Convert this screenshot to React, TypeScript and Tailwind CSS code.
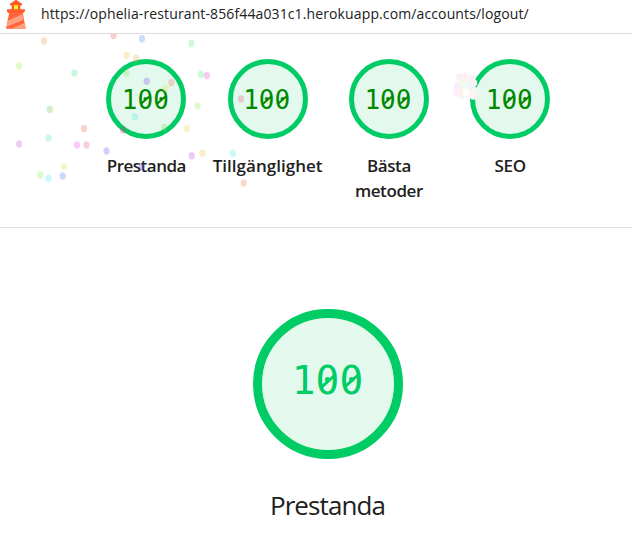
type Score = { label: string; labelClass: string };

const scores: Score[] = [
  { label: 'Prestanda', labelClass: 'tracking-[-0.52px]' },
  { label: 'Tillgänglighet', labelClass: 'tracking-[0.02px]' },
  { label: 'Bästa metoder', labelClass: 'tracking-[-0.4px]' },
  { label: 'SEO', labelClass: 'tracking-[-0.2px]' },
];

// Confetti: x, y, colour
const confetti: [number, number, string][] = [
  [44, 41, '#f0a050'], [19, 66, '#a0ee50'], [74.5, 73, '#40e890'], [49.5, 109.5, '#50d8f0'], [50.8, 109.5, '#f8dc70'],
  [19, 144, '#dc50ee'], [48.5, 138, '#50eeb0'], [84, 128.6, '#f26058'], [77, 145, '#ea50ee'], [86.5, 145, '#f05890'],
  [64, 166.5, '#eee050'], [40.3, 174.7, '#80ee50'], [48.5, 178.3, '#50e8f0'], [62.7, 176, '#5080f0'], [106.5, 151, '#8860f0'],
  [113.5, 35.5, '#f06058'], [142, 38.7, '#5090f0'], [191.5, 43.5, '#50ee80'], [126.5, 55.3, '#f0c850'], [136, 58.5, '#f0b050'],
  [126.5, 73, '#80e850'], [146.7, 81.3, '#8050e8'], [171.5, 82.5, '#f07050'], [165.7, 88.5, '#f0d850'], [201, 74.3, '#50ee80'],
  [207, 75.5, '#f050d0'], [197.5, 106, '#90ee50'], [134.8, 116.7, '#50e8e8'], [123, 130, '#e04070'], [164.3, 127.5, '#70e050'],
  [187, 128.5, '#f0d050'], [191.7, 155.7, '#b850f0'], [202.3, 153.3, '#f0c850'], [142, 167, '#6060f0'],
  [241, 99, '#f05890'], [233, 153.3, '#50eee0'], [243.7, 183, '#f08050'],
];

const burst: [number, number, string][] = [
  [463, 80, '#fdf4f6'], [470, 86, '#f9f4fb'], [462, 88, '#fbf7f0'], [473, 90, '#fbf6fa'], [468, 94, '#fdf5f8'],
  [459, 77, '#fdeef3'], [465, 77, '#fdf0f5'], [472, 78, '#faeefb'], [468, 82, '#fbf5e9'], [461, 83, '#f2faee'],
  [474, 83, '#fceefa'], [457, 86, '#f9effc'], [466, 85, '#eff9f5'], [472, 87, '#f3f1fc'], [460, 91, '#fdf0ee'],
  [456, 93, '#fceefa'], [476, 91, '#f0f8f4'], [471, 93, '#fdf5e9'], [462, 95, '#fbf3e8'], [475, 95, '#fceff8'],
  [466, 93, '#ffffff'], [473, 96, '#fdf5f4'],
];

function Lighthouse() {
  return (
    <svg className="h-[30px] w-[22px] shrink-0" viewBox="15 0 66 90">
      <path d="M30 11 48-1 66 11v5h-5v14H35V16h-5z" fill="#ff5a2b" />
      <path d="M21 28h54v5l-6 7H27l-6-5z" fill="#ff5a2b" />
      <path d="M28 37h40l9 49H18z" fill="#ff6538" />
      <path d="M23 62 67 43l3 17-50 20zM35 86l38-17 4 17z" fill="#ffa080" />
      <path d="M42 15h12v13H42z" fill="#ffee16" />
    </svg>
  );
}

// Zero with a diagonal slash through its counter
function Zero({ slash }: { slash: string }) {
  return (
    <span className="relative inline-block">
      0
      <span className={`absolute left-1/2 top-1/2 -translate-x-1/2 -translate-y-1/2 -rotate-[42deg] bg-current ${slash}`} />
    </span>
  );
}

function Confetti() {
  return (
    <svg className="pointer-events-none absolute left-0 top-[34px] h-[193px] w-[632px]" viewBox="0 34 632 193">
      {confetti.map(([x, y, c], i) => (
        <ellipse key={i} cx={x} cy={y} rx="3.1" ry="3.7" fill={c} opacity="0.3" />
      ))}
      {burst.map(([x, y, c], i) => (
        <ellipse key={i} cx={x} cy={y} rx="3.2" ry="3.7" fill={c} />
      ))}
    </svg>
  );
}

export default function App() {
  return (
    <div className="relative h-[539px] w-[632px] overflow-hidden bg-white font-['Open_Sans','Noto_Sans',sans-serif] text-[#212121]">
      <header className="flex h-[34px] items-start border-b border-[#dcdcdc] pl-[5px]">
        <Lighthouse />
        <span className="ml-[14px] mt-[4px] whitespace-nowrap text-[14px] leading-5 tracking-[0.12px]">
          https://ophelia-resturant-856f44a031c1.herokuapp.com/accounts/logout/
        </span>
      </header>
      <section className="flex h-[194px] border-b border-[#e0e0e0] pl-[85.7px] pt-[25px]">
        {scores.map((s) => (
          <div key={s.label} className="flex w-[121.3px] shrink-0 flex-col items-center">
            <div className="flex size-20 items-center justify-center rounded-full border-[5.5px] border-[#00cc66] bg-[#e4f9ee] pr-[2px] pt-[2px] font-['DejaVu_Sans_Mono',monospace] text-[26px] leading-none text-[#008800]">
              1<Zero slash="h-[1.5px] w-[11px]" /><Zero slash="h-[1.5px] w-[11px]" />
            </div>
            <div className={`mt-[14px] w-[112px] text-center text-[17px] font-semibold leading-[25px] ${s.labelClass}`}>
              {s.label}
            </div>
          </div>
        ))}
      </section>
      <main className="flex flex-col items-center pl-[23px] pt-[81px]">
        <div className="flex size-[150px] items-center justify-center rounded-full border-[9px] border-[#00cc66] bg-[#e4f9ee] pb-[7px] font-['DejaVu_Sans_Mono',monospace] text-[39.5px] leading-none text-[#00cc66]">
          1<Zero slash="h-[2.5px] w-[17px]" /><Zero slash="h-[2.5px] w-[17px]" />
        </div>
        <h1 className="mt-[28px] text-[26px] leading-9 tracking-[-0.9px]">Prestanda</h1>
      </main>
      <Confetti />
    </div>
  );
}
